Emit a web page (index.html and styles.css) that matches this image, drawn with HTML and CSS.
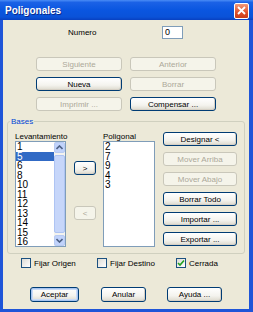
FILE: index.html
```html
<!DOCTYPE html>
<html lang="es">
<head>
  <meta charset="UTF-8" />
  <title>Poligonales</title>
  <link rel="stylesheet" href="styles.css">
</head>
<body>

  <div class="window">
    <div class="titlebar">
      <span class="title">Poligonales</span>
      <span class="close">
        <svg width="9" height="9" viewBox="0 0 9 9"><path d="M1 1 L8 8 M8 1 L1 8" stroke="#fff" stroke-width="1.8" /></svg>
      </span>
    </div>

    <div class="client">
      <div class="numero-row">
        <span class="numero-label">Numero</span>
        <div class="edit">0</div>
      </div>

      <div class="top-buttons">
        <button class="btn" disabled>Siguiente</button>
        <button class="btn" disabled>Anterior</button>
        <button class="btn">Nueva</button>
        <button class="btn" disabled>Borrar</button>
        <button class="btn" disabled>Imprimir ...</button>
        <button class="btn">Compensar ...</button>
      </div>

      <fieldset class="group">
        <legend>Bases</legend>
        <div class="bases">
          <div class="col col-lev">
            <div class="cap">Levantamiento</div>
            <div class="list">
              <div class="items">
                <div class="item">1</div>
                <div class="item selected">5</div>
                <div class="item">6</div>
                <div class="item">8</div>
                <div class="item">10</div>
                <div class="item">11</div>
                <div class="item">12</div>
                <div class="item">13</div>
                <div class="item">14</div>
                <div class="item">15</div>
                <div class="item">16</div>
              </div>
              <div class="scrollbar">
                <div class="arrow">
                  <svg width="7" height="5" viewBox="0 0 7 5"><path d="M0.5 4 L3.5 1 L6.5 4" fill="none" stroke="#4D6185" stroke-width="1.6" /></svg>
                </div>
                <div class="track"><div class="thumb"></div></div>
                <div class="arrow">
                  <svg width="7" height="5" viewBox="0 0 7 5"><path d="M0.5 1 L3.5 4 L6.5 1" fill="none" stroke="#4D6185" stroke-width="1.6" /></svg>
                </div>
              </div>
            </div>
          </div>

          <div class="mid">
            <button class="btn btn-small">&gt;</button>
            <button class="btn btn-small" disabled>&lt;</button>
          </div>

          <div class="col col-pol">
            <div class="cap">Poligonal</div>
            <div class="list">
              <div class="items">
                <div class="item">2</div>
                <div class="item">7</div>
                <div class="item">9</div>
                <div class="item">4</div>
                <div class="item">3</div>
              </div>
            </div>
          </div>

          <div class="side">
            <button class="btn">Designar &lt;</button>
            <button class="btn" disabled>Mover Arriba</button>
            <button class="btn" disabled>Mover Abajo</button>
            <button class="btn">Borrar Todo</button>
            <button class="btn">Importar ...</button>
            <button class="btn">Exportar ...</button>
          </div>
        </div>
      </fieldset>

      <div class="checks">
        <label class="check"><span class="box"></span>Fijar Origen</label>
        <label class="check"><span class="box"></span>Fijar Destino</label>
        <label class="check"><span class="box">
          <svg width="8" height="8" viewBox="0 0 8 8"><path d="M1 4 L3 6 L7 1.5" fill="none" stroke="#21A121" stroke-width="1.6" /></svg>
        </span>Cerrada</label>
      </div>

      <div class="bottom">
        <button class="btn btn-default btn-ok">Aceptar</button>
        <button class="btn btn-cancel">Anular</button>
        <button class="btn btn-help">Ayuda ...</button>
      </div>
    </div>
  </div>

</body>
</html>
```

FILE: styles.css
```css
body {
  margin: 0;
  background: #1f55d8;
  font-family: "Liberation Sans", Arial, sans-serif;
}

.window {
  width: 253px;
  height: 312px;
  box-sizing: border-box;
  background: #1f55d8;
  display: flex;
  flex-direction: column;
  overflow: hidden;
}

.titlebar {
  height: 20px;
  flex: none;
  display: flex;
  align-items: center;
  justify-content: space-between;
  padding: 0 4px 0 5px;
  background: linear-gradient(to bottom, #4a8cf6 0%, #1b62e6 12%, #0a56e0 50%, #0a52d8 85%, #0840c0 100%);
}

.title {
  color: #fff;
  font-weight: bold;
  font-size: 10px;
  text-shadow: 1px 1px 0 #0a2a8a;
}

.close {
  width: 13px;
  height: 14px;
  margin-top: 1px;
  display: flex;
  align-items: center;
  justify-content: center;
  background: linear-gradient(to bottom, #f29a7a, #e0502a 60%, #c83c18);
  border: 1px solid #fff;
  border-radius: 2px;
}

.client {
  flex: 1;
  margin: 0 4px 3px 3px;
  background: #ece9d8;
  font-size: 8px;
  color: #000;
  display: flex;
  flex-direction: column;
}

/* numero */
.numero-row {
  display: flex;
  align-items: center;
  margin-top: 6px;
  padding-left: 65px;
  height: 13px;
}

.numero-label {
  width: 94px;
}

.edit {
  width: 21px;
  height: 13px;
  box-sizing: border-box;
  border: 1px solid #7f9db9;
  background: #fff;
  font-size: 9px;
  line-height: 11px;
  padding-left: 2px;
}

/* buttons */
.btn {
  font-family: "Liberation Sans", Arial, sans-serif;
  font-size: 8px;
  color: #000;
  padding: 0;
  height: 14px;
  box-sizing: border-box;
  border: 1px solid #003c74;
  border-radius: 3px;
  background: linear-gradient(to bottom, #ffffff 0%, #f4f3ee 60%, #dcd9cd 100%);
  box-shadow: inset -1px -1px 0 #d6d0c5;
}

.btn:disabled {
  color: #aca899;
  border-color: #c9c7ba;
  background: #f5f4ea;
  box-shadow: none;
}

.top-buttons {
  display: grid;
  grid-template-columns: 86px 86px;
  column-gap: 8px;
  row-gap: 6px;
  margin-top: 18px;
  padding-left: 33px;
}

/* group */
.group {
  margin: 6px 4px 0 4px;
  padding: 0 0 6px 0;
  border: 1px solid #d0d0bf;
  border-radius: 3px;
  min-width: 0;
}

.group legend {
  margin-left: 2px;
  padding: 0 1px;
  font-size: 8px;
  line-height: 9px;
  color: #0046d5;
}

.bases {
  display: flex;
  margin-top: 6px;
  padding-left: 7px;
}

.col {
  display: flex;
  flex-direction: column;
}

.col-lev {
  width: 51px;
}

.col-pol {
  width: 52px;
  margin-left: 7px;
}

.cap {
  height: 9px;
  line-height: 9px;
  font-size: 8px;
}

.list {
  height: 106px;
  box-sizing: border-box;
  border: 1px solid #7f9db9;
  background: #fff;
  display: flex;
}

.items {
  flex: 1;
  font-size: 10px;
}

.item {
  height: 9.5px;
  line-height: 9.5px;
  padding-left: 1px;
}

.item.selected {
  background: #316ac5;
  color: #fff;
}

.scrollbar {
  width: 11px;
  display: flex;
  flex-direction: column;
  background: #f4f3ee;
}

.arrow {
  height: 11px;
  box-sizing: border-box;
  display: flex;
  align-items: center;
  justify-content: center;
  background: #c1d3fb;
  border: 1px solid #b8cbf2;
  border-radius: 2px;
}

.track {
  flex: 1;
  padding: 1px 0;
  display: flex;
  flex-direction: column;
}

.thumb {
  flex: 1;
  margin: 1px 0;
  background: #c6d6fa;
  border: 1px solid #aec4f3;
  border-radius: 2px;
}

.mid {
  width: 22px;
  margin-left: 8px;
  display: flex;
  flex-direction: column;
  padding-top: 29px;
  gap: 31px;
}

.btn-small {
  width: 22px;
}

.side {
  width: 74px;
  margin-left: 8px;
  display: flex;
  flex-direction: column;
  gap: 6px;
}

/* checks */
.checks {
  display: grid;
  grid-template-columns: 76px 79px auto;
  margin-top: 4px;
  padding-left: 18px;
  height: 10px;
}

.check {
  display: flex;
  align-items: center;
  gap: 3px;
  font-size: 8px;
}

.box {
  width: 10px;
  height: 10px;
  box-sizing: border-box;
  border: 1px solid #1c5180;
  background: linear-gradient(135deg, #dcdbd5, #ffffff);
  display: flex;
  align-items: center;
  justify-content: center;
}

/* bottom */
.bottom {
  display: flex;
  margin-top: 19px;
  padding-left: 27px;
}

.bottom .btn {
  height: 15px;
}

.btn-ok {
  width: 49px;
}

.btn-cancel {
  width: 45px;
  margin-left: 22px;
}

.btn-help {
  width: 55px;
  margin-left: 21px;
}

.btn-default {
  box-shadow: inset 0 0 0 1px #a6c4f0, inset 0 0 0 2px #cadbf7;
}
```
